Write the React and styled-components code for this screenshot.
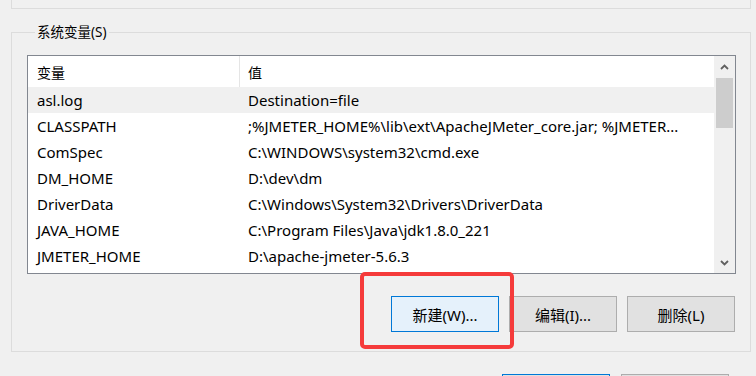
import React from "react";
import styled, { createGlobalStyle } from "styled-components";

const Global = createGlobalStyle`
  html, body { margin: 0; padding: 0; }
  body {
    width: 756px;
    height: 376px;
    overflow: hidden;
    background: #f0f0f0;
    font-family: "Noto Sans", "Noto Sans CJK SC", sans-serif;
    font-size: 15px;
    color: #000;
  }
`;

const Page = styled.div`
  width: 756px;
  height: 376px;
  overflow: hidden;
  display: flex;
  flex-direction: column;
`;

const PrevGroup = styled.div`
  box-sizing: border-box;
  margin-left: 11px;
  width: 740px;
  height: 9px;
  border: 1px solid #dcdcdc;
  border-top: none;
  flex: none;
`;

const Group = styled.fieldset`
  box-sizing: border-box;
  margin: 13px 0 0 11px;
  width: 740px;
  padding: 0 14px 19px 15px;
  border: 1px solid #dcdcdc;
  min-width: 0;
  flex: none;
`;

const Legend = styled.legend`
  margin-left: 8px;
  padding: 0 2px;
  font-size: 13.5px;
  line-height: 20px;
  color: #000;
`;

const List = styled.div`
  box-sizing: border-box;
  margin-top: 13px;
  height: 219px;
  border: 1px solid #828790;
  background: #fff;
  display: flex;
  overflow: hidden;
`;

const Table = styled.div`
  flex: 1;
  min-width: 0;
  display: flex;
  flex-direction: column;
`;

const Header = styled.div`
  display: grid;
  grid-template-columns: 211px 1fr;
  height: 31px;
  flex: none;
  background: #fff;
`;

const HeadCell = styled.div`
  padding-left: 9px;
  display: flex;
  align-items: center;
  font-size: 14px;
  border-right: ${(p) => (p.$divider ? "1px solid #e5e5e5" : "none")};
  margin-right: ${(p) => (p.$divider ? "-1px" : "0")};
`;

const Row = styled.div`
  display: grid;
  grid-template-columns: 211px 1fr;
  height: 26px;
  flex: none;
  background: ${(p) => (p.$selected ? "#f0f0f0" : "#fff")};
`;

const Cell = styled.div`
  padding-left: 9px;
  display: flex;
  align-items: center;
  white-space: nowrap;
  overflow: hidden;
`;

const Scrollbar = styled.div`
  width: 21px;
  flex: none;
  background: #f0f0f0;
  display: flex;
  flex-direction: column;
  align-items: center;
`;

const Arrow = styled.div`
  height: 21px;
  width: 21px;
  display: flex;
  align-items: center;
  justify-content: center;
  flex: none;
`;

const Track = styled.div`
  flex: 1;
  width: 17px;
  padding-top: 1px;
`;

const Thumb = styled.div`
  height: 50px;
  background: #cdcdcd;
`;

const ButtonRow = styled.div`
  margin-top: 22px;
  padding-right: 1px;
  display: flex;
  justify-content: flex-end;
  gap: 10px;
`;

const Button = styled.div`
  box-sizing: border-box;
  width: 108px;
  height: 36px;
  display: flex;
  align-items: center;
  justify-content: center;
  border: 1px solid ${(p) => (p.$focused ? "#0078d7" : "#adadad")};
  background: ${(p) => (p.$hot ? "#e5f1fb" : "#e1e1e1")};
  font-size: 15px;
  color: #000;
`;

const Annotated = styled.div`
  position: relative;
  &::after {
    content: "";
    position: absolute;
    left: -31px;
    right: -15px;
    top: -24px;
    bottom: -17px;
    border: 4px solid #f53b3b;
    border-radius: 5px;
    pointer-events: none;
  }
`;

const DialogButtons = styled.div`
  margin: 22px 27px 0 0;
  display: flex;
  justify-content: flex-end;
  gap: 11px;
  flex: none;
`;

const Chevron = ({ down }) => (
  <svg width="9" height="6" viewBox="0 0 9 6">
    <path
      d={down ? "M1 1 L4.5 4.5 L8 1" : "M1 5 L4.5 1.5 L8 5"}
      fill="none"
      stroke="#606060"
      strokeWidth="1.8"
    />
  </svg>
);

const rows = [
  ["asl.log", "Destination=file"],
  ["CLASSPATH", ";%JMETER_HOME%\\lib\\ext\\ApacheJMeter_core.jar; %JMETER..."],
  ["ComSpec", "C:\\WINDOWS\\system32\\cmd.exe"],
  ["DM_HOME", "D:\\dev\\dm"],
  ["DriverData", "C:\\Windows\\System32\\Drivers\\DriverData"],
  ["JAVA_HOME", "C:\\Program Files\\Java\\jdk1.8.0_221"],
  ["JMETER_HOME", "D:\\apache-jmeter-5.6.3"],
];

export default function App() {
  return (
    <>
      <Global />
      <Page>
        <PrevGroup />
        <Group>
          <Legend>系统变量(S)</Legend>
          <List>
            <Table>
              <Header>
                <HeadCell $divider>变量</HeadCell>
                <HeadCell>值</HeadCell>
              </Header>
              {rows.map(([k, v], i) => (
                <Row key={k} $selected={i === 0}>
                  <Cell>{k}</Cell>
                  <Cell>{v}</Cell>
                </Row>
              ))}
            </Table>
            <Scrollbar>
              <Arrow>
                <Chevron />
              </Arrow>
              <Track>
                <Thumb />
              </Track>
              <Arrow>
                <Chevron down />
              </Arrow>
            </Scrollbar>
          </List>
          <ButtonRow>
            <Annotated>
              <Button $focused $hot>新建(W)...</Button>
            </Annotated>
            <Button>编辑(I)...</Button>
            <Button>删除(L)</Button>
          </ButtonRow>
        </Group>
        <DialogButtons>
          <Button $focused />
          <Button />
        </DialogButtons>
      </Page>
    </>
  );
}
